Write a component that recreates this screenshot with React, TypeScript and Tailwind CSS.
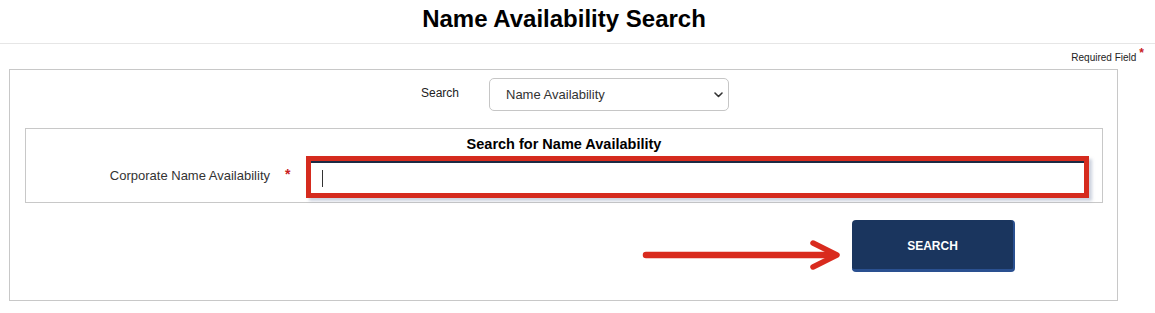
import React from "react";

export default function App() {
  return (
    <div className="w-[1155px] h-[313px] bg-white text-[#333] font-['Liberation_Sans',Arial,sans-serif] overflow-hidden">
      <div className="h-[44px] border-b border-[#e6e6e6]">
        <h1 className="w-[1128px] pt-[5px] text-center text-[24px] leading-[28px] font-bold text-black">
          Name Availability Search
        </h1>
      </div>

      <div className="h-[25px] flex justify-end items-start pr-[11px]">
        <span className="mt-[8px] text-[10px] leading-[12px] text-[#222]">Required Field</span>
        <span className="ml-[3px] mt-[3px] text-[12px] leading-[12px] font-bold text-[#c9211e]">*</span>
      </div>

      <div className="ml-[9px] w-[1109px] h-[232px] border border-[#c8c8c8] pt-[8px]">
        <div className="grid grid-cols-[449px_240px] gap-x-[30px] items-center">
          <label className="text-right text-[12px] leading-[14px] text-[#222] pb-[4px]">Search</label>
          <div className="h-[33px] border border-[#c6c6c6] rounded-[5px] flex items-center justify-between pl-[16px] pr-[5px] bg-white">
            <span className="text-[13px] leading-[16px] text-[#333]">Name Availability</span>
            <svg width="9" height="6" viewBox="0 0 9 6" className="mt-[1px]">
              <polyline points="1,1 4.5,4.5 8,1" fill="none" stroke="#333" strokeWidth="1.6" strokeLinecap="round" strokeLinejoin="round" />
            </svg>
          </div>
        </div>

        <div className="mt-[17px] ml-[15px] mr-[14px] h-[75px] border border-[#c8c8c8]">
          <div className="pt-[7px] text-center text-[14.5px] leading-[16px] font-bold text-black">
            Search for Name Availability
          </div>
          <div className="mt-[4px] flex items-center">
            <label className="w-[244px] text-right text-[13px] leading-[15px] text-[#333] mt-[-3px]">
              Corporate Name Availability
            </label>
            <span className="ml-[15px] w-[7px] text-[14px] leading-[14px] font-bold text-[#c9211e] mt-[-6px]">*</span>
            <div className="ml-[14px] w-[783px] h-[42px] border-[5px] border-[#d52b1e] bg-white shadow-[3px_3px_3px_rgba(110,125,160,0.35)]">
              <div className="h-full border-t-2 border-[#1b2a44] flex items-center pl-[11px]">
                <div className="w-px h-[17px] bg-[#333]" />
              </div>
            </div>
          </div>
        </div>

        <div className="mt-[17px] flex items-start">
          <svg width="205" height="40" viewBox="0 0 205 40" className="ml-[630px] mt-[15px]">
            <line x1="6" y1="20" x2="194" y2="20" stroke="#d92b1e" strokeWidth="6.5" strokeLinecap="round" />
            <polyline points="173,8 197,20 173,32" fill="none" stroke="#d92b1e" strokeWidth="5.5" strokeLinecap="round" strokeLinejoin="round" />
          </svg>
          <button className="ml-[7px] w-[163px] h-[52px] rounded-[4px] bg-[#1a355e] border-r-2 border-b-[3px] border-[#2a5090] text-white text-[12px] font-bold leading-[14px] flex items-center justify-center pt-[2px]">
            SEARCH
          </button>
        </div>
      </div>
    </div>
  );
}
